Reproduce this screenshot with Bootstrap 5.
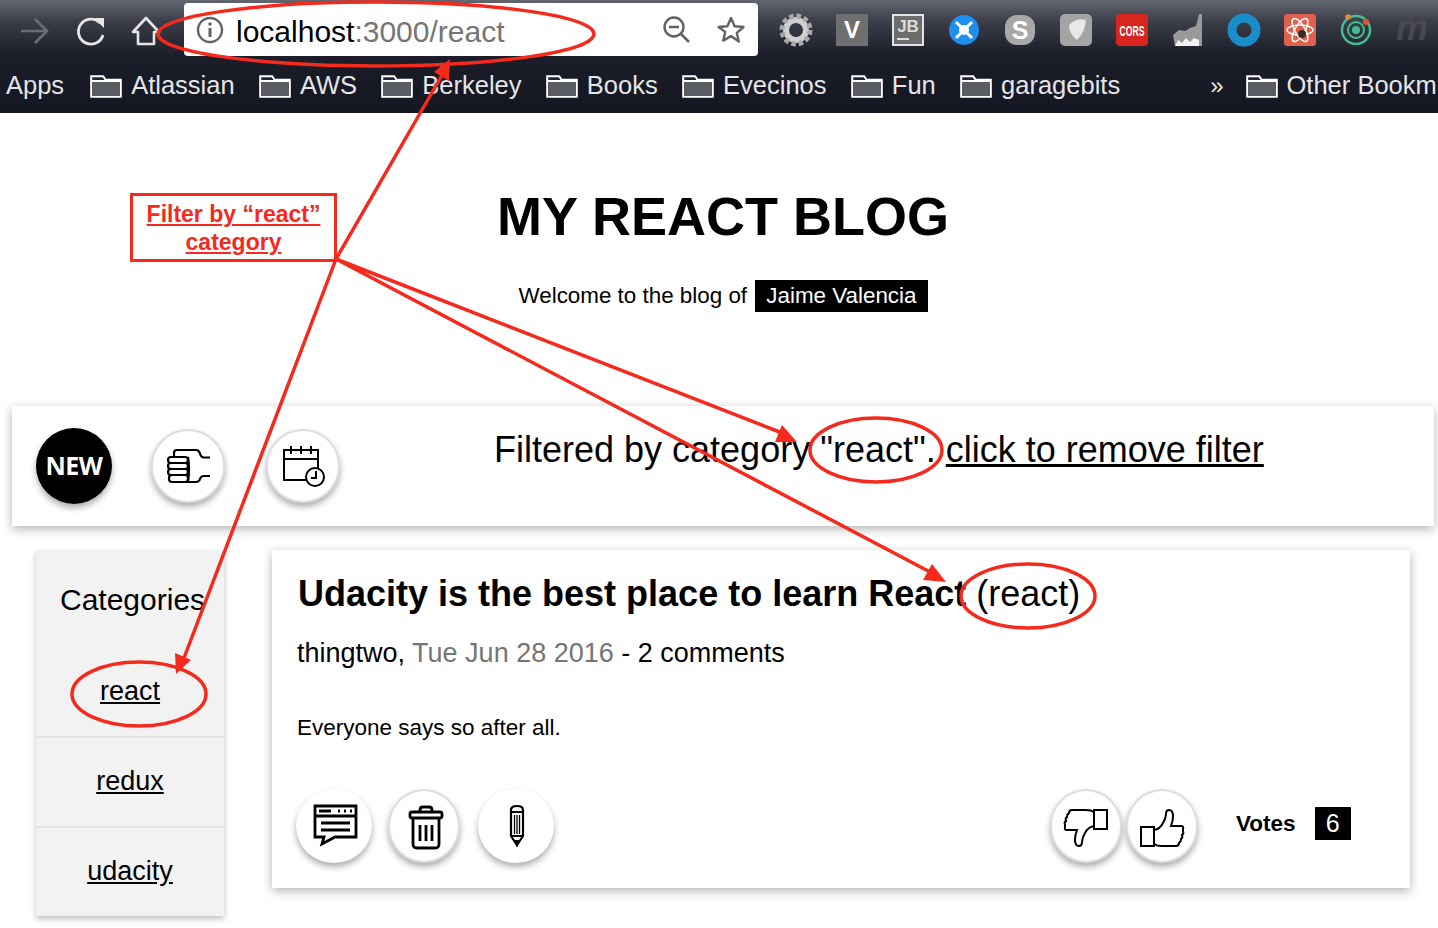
<!DOCTYPE html>
<html lang="en">
<head>
  <meta charset="UTF-8">
  <meta name="viewport" content="width=device-width,initial-scale=1">
  <title>My React Blog</title>
  <link href="https://cdn.jsdelivr.net/npm/bootstrap@5.3.3/dist/css/bootstrap.min.css" rel="stylesheet">
  <style>
    html, body { height: 928px; overflow: hidden; }
    body { font-family: "Liberation Sans", Arial, sans-serif; color: #000; background: #fff; position: relative; }
    a { color: #000; }

    .browser-chrome { height: 113px; background: linear-gradient(180deg, #63666f 0, #3a3c47 22px, #1b1d28 56px, #141722 100%); overflow: hidden; }
    .tool-row { height: 60px; padding-top: 3px; }
    .nav-ico { width: 56px; height: 53px; }
    .nav-first { margin-left: 6px; margin-right: 10px; flex: none; }
    .url-box { width: 574px; height: 53px; background: #fff; border-radius: 4px; padding: 0 12px; font-size: 30px; flex: none; }
    .url-host { margin-left: 12px; padding-top: 3px; }
    .url-rest { color: #757575; }
    .ext-row { margin-left: 10px; flex: none; }
    .ext-ico { width: 56px; height: 56px; margin-top: -3px; }
    .mark-row { height: 51px; color: #e4e5e8; font-size: 25.5px; padding-left: 6px; white-space: nowrap; }
    .mark-item { margin-left: 24.3px; gap: 9px; }
    .mark-first { margin-left: 26px; }
    .mark-more { margin-left: 90px; font-size: 24px; }
    .mark-last { margin-left: 22px; }

    .blog-head { height: 293px; text-align: center; }
    .blog-title { font-size: 54px; font-weight: 700; line-height: 64px; padding-top: 71px; margin: 0 0 0 8px; }
    .blog-welcome { font-size: 22.4px; margin-top: 31px; margin-left: 8px; }
    .owner-chip { background: #000; color: #fff; display: inline-block; height: 32px; line-height: 32px; padding: 0 11px; margin-left: 2px; }

    .filter-bar { margin-left: 12px; width: 1422px; height: 120px; padding: 22px 24px 0; box-shadow: 0 3px 10px rgba(0,0,0,.3); }
    .filter-text { font-size: 36px; margin-left: 154px; line-height: 44px; }
    .round-btn { width: 74px; height: 74px; padding: 0; border-radius: 50%; background: #fff; border: 2px solid #dedede; box-shadow: 0 4px 6px rgba(0,0,0,.32); flex: none; display: flex; align-items: center; justify-content: center; }
    .round-btn:hover { background: #fff; border-color: #dedede; }
    .round-btn svg { display: block; flex: none; }
    .round-soft { width: 76px; border: 0; }
    .round-slim { width: 72px; }
    .round-new { width: 76px; height: 76px; background: #000; color: #fff; border: 0; font-family: "Open Sans", sans-serif; font-weight: 700; font-size: 25px; letter-spacing: -.5px; }
    .round-new:hover { background: #000; color: #fff; }
    .ml-bar1 { margin-left: 39px; margin-top: 1px; }
    .ml-bar2 { margin-left: 41px; margin-top: 1px; }

    .blog-main { padding-left: 36px; padding-top: 24px; gap: 48px; }
    .cat-panel { width: 188px; height: 366px; background: #f2f2f2; box-shadow: 0 3px 6px rgba(0,0,0,.25); text-align: center; }
    .cat-title { font-size: 30px; padding: 30px 0 0 24px; height: 98px; margin: 0; font-weight: 400; line-height: 40px; text-align: left; }
    .cat-item { height: 90px; font-size: 27px; padding-top: 23px; line-height: 40px; border-bottom: 2px solid #e4e4e4; }
    .cat-item:last-child { border-bottom: 0; }

    .post-card { width: 1138px; height: 338px; border: 0; border-radius: 0; box-shadow: 0 3px 10px rgba(0,0,0,.3); padding: 22px 26px 0; }
    .post-title { font-size: 36px; line-height: 44px; margin: 0; font-weight: 700; white-space: nowrap; }
    .post-tag { font-weight: 400; }
    .post-meta { font-size: 27px; line-height: 36px; margin: 19px 0 0 -1px; }
    .post-date { color: #757575; }
    .post-body { font-size: 22.5px; line-height: 30px; margin: 42px 0 0 -1px; }
    .post-actions { margin-top: 46px; margin-left: -2px; }
    .gap-trash { margin-left: 16px; }
    .gap-pencil { margin-left: 18px; }
    .vote-down { margin-left: 496px; }
    .vote-up { margin-left: 4px; }
    .vote-label { font-size: 22.5px; font-weight: 700; margin-left: 38px; margin-bottom: 5px; }
    .vote-count { background: #000; color: #fff; font-size: 25px; width: 36px; height: 33px; line-height: 33px; text-align: center; margin-left: 19px; margin-bottom: 6px; }

    .notes-layer { position: absolute; left: 0; top: 0; pointer-events: none; }
    .note-box { position: absolute; left: 130px; top: 193px; width: 207px; height: 69px; border: 3px solid #f52a1c; background: #fff; color: #f52a1c; font-weight: 700; font-size: 23px; line-height: 28px; text-align: center; padding-top: 4px; text-decoration: underline; }
  </style>
</head>
<body>

<svg width="0" height="0" class="d-block">
  <defs>
    <symbol id="ic-folder" viewBox="0 0 32 24">
      <path d="M1.2 22.8V2.2h12l2.4 3.6h15.2v17z" fill="#23252f" stroke="#fff" stroke-width="2"/>
      <path d="M2 7.500h28v14.500H2z" fill="#5a5c64"/>
      <path d="M1.2 7h29.6" stroke="#fff" stroke-width="2"/>
    </symbol>
  </defs>
</svg>

<header class="browser-chrome">
  <div class="tool-row d-flex">
    <div class="nav-first d-flex">
      <svg class="nav-ico" viewBox="0 0 56 53"><path d="M15 29h26M29 17l12 12-12 12" transform="translate(0 -1)" fill="none" stroke="#6b6d75" stroke-width="2.6"/></svg>
      <svg class="nav-ico" viewBox="0 0 56 53"><path d="M38 20a12.5 12.5 0 1 0 3 12" fill="none" stroke="#e6e6e6" stroke-width="2.8"/><path d="M32 14h10v10z" fill="#e6e6e6" transform="translate(0 1)"/></svg>
      <svg class="nav-ico" viewBox="0 0 56 53"><path d="M28 15L15 29h5v12h16V29h5z" fill="none" stroke="#e6e6e6" stroke-width="2.6" stroke-linejoin="round"/></svg>
    </div>
    <div class="url-box d-flex align-items-center">
      <svg width="28" height="28" viewBox="0 0 28 28"><circle cx="14" cy="14" r="12" fill="none" stroke="#5f6368" stroke-width="2.4"/><path d="M14 12v9" stroke="#5f6368" stroke-width="3"/><circle cx="14" cy="8" r="1.8" fill="#5f6368"/></svg>
      <span class="url-host">localhost<span class="url-rest">:3000/react</span></span>
      <svg class="ms-auto" width="30" height="30" viewBox="0 0 30 30"><circle cx="12" cy="12" r="9.5" fill="none" stroke="#5f6368" stroke-width="2.4"/><path d="M7 12h10M19 19l8 8" stroke="#5f6368" stroke-width="2.6"/></svg>
      <svg class="ms-4" width="30" height="30" viewBox="0 0 30 30"><path d="M15 3l3.6 8.200 8.900.8-6.700 5.900 2 8.700L15 21.100l-7.800 4.500 2-8.700L2.500 12l8.900-.8z" fill="none" stroke="#5f6368" stroke-width="2.4" stroke-linejoin="round"/></svg>
    </div>
    <div class="ext-row d-flex">
      <svg class="ext-ico" viewBox="0 0 56 56"><circle cx="28" cy="30" r="10" fill="none" stroke="#d0d0d0" stroke-width="6"/><circle cx="28" cy="30" r="14" fill="none" stroke="#a9a9a9" stroke-width="5" stroke-dasharray="4.5 2.83"/></svg>
      <svg class="ext-ico" viewBox="0 0 56 56"><rect x="12" y="14" width="32" height="32" fill="#6f6f6f"/><text x="28" y="38" font-size="24" font-weight="700" fill="#fff" text-anchor="middle">V</text></svg>
      <svg class="ext-ico" viewBox="0 0 56 56"><rect x="13" y="15" width="30" height="30" fill="#6d6d6d" stroke="#e4e4e4" stroke-width="2"/><text x="28" y="32" font-size="17" font-weight="700" fill="#dcdcdc" text-anchor="middle">JB</text><path d="M17 39h12" stroke="#dcdcdc" stroke-width="2"/></svg>
      <svg class="ext-ico" viewBox="0 0 56 56"><circle cx="28" cy="30" r="15" fill="#1f8fee"/><circle cx="28" cy="30" r="5" fill="#fff"/><path d="M20 22l16 16M36 22L20 38" stroke="#fff" stroke-width="3"/></svg>
      <svg class="ext-ico" viewBox="0 0 56 56"><rect x="13" y="15" width="30" height="30" rx="12" fill="#a8a8a8"/><text x="28" y="39" font-size="25" font-weight="700" fill="#fff" text-anchor="middle">S</text></svg>
      <svg class="ext-ico" viewBox="0 0 56 56"><rect x="12" y="14" width="32" height="32" rx="5" fill="#a4a4a4"/><path d="M21 25q8-8 17-5-1 12-9 20-8-6-8-15z" fill="#e8e8e8"/></svg>
      <svg class="ext-ico" viewBox="0 0 56 56"><rect x="12" y="14" width="32" height="32" rx="4" fill="#d8261c"/><text x="28" y="36" font-size="14" font-weight="700" fill="#fff" text-anchor="middle" textLength="25" lengthAdjust="spacingAndGlyphs">CORS</text></svg>
      <svg class="ext-ico" viewBox="0 0 56 56"><path d="M13 35l6-5 6 1 5-3 6-2 3-12h3v32H15z" fill="#9a9a9a"/><path d="M15 46l3-6 4 3 4-5 4 4 4-4 5 2v6z" fill="#f2f2f2"/></svg>
      <svg class="ext-ico" viewBox="0 0 56 56"><circle cx="28" cy="30" r="12" fill="none" stroke="#1a8dcb" stroke-width="9"/></svg>
      <svg class="ext-ico" viewBox="0 0 56 56"><rect x="12" y="14" width="32" height="32" rx="3" fill="#e0604c"/><g fill="none" stroke="#fff" stroke-width="1.5"><ellipse cx="28" cy="30" rx="13" ry="5"/><ellipse cx="28" cy="30" rx="13" ry="5" transform="rotate(60 28 30)"/><ellipse cx="28" cy="30" rx="13" ry="5" transform="rotate(120 28 30)"/></g><circle cx="30" cy="34" r="4" fill="#3a2a28"/></svg>
      <svg class="ext-ico" viewBox="0 0 56 56"><circle cx="28" cy="30" r="14" fill="none" stroke="#3fbf8f" stroke-width="2.5"/><circle cx="28" cy="30" r="8" fill="none" stroke="#3fbf8f" stroke-width="2"/><circle cx="28" cy="30" r="4" fill="#3fbf8f"/><circle cx="20" cy="17" r="2.8" fill="#ea8a38"/><circle cx="38" cy="22" r="3" fill="#e2523a"/></svg>
      <svg class="ext-ico" viewBox="0 0 56 56"><text x="28" y="40" font-size="36" font-style="italic" font-weight="700" fill="#474850" text-anchor="middle">m</text></svg>
    </div>
  </div>
  <div class="mark-row d-flex align-items-center">
    <span>Apps</span>
    <span class="mark-item mark-first d-flex align-items-center"><svg width="32" height="24"><use href="#ic-folder"/></svg>Atlassian</span>
    <span class="mark-item d-flex align-items-center"><svg width="32" height="24"><use href="#ic-folder"/></svg>AWS</span>
    <span class="mark-item d-flex align-items-center"><svg width="32" height="24"><use href="#ic-folder"/></svg>Berkeley</span>
    <span class="mark-item d-flex align-items-center"><svg width="32" height="24"><use href="#ic-folder"/></svg>Books</span>
    <span class="mark-item d-flex align-items-center"><svg width="32" height="24"><use href="#ic-folder"/></svg>Evecinos</span>
    <span class="mark-item d-flex align-items-center"><svg width="32" height="24"><use href="#ic-folder"/></svg>Fun</span>
    <span class="mark-item d-flex align-items-center"><svg width="32" height="24"><use href="#ic-folder"/></svg>garagebits</span>
    <span class="mark-more">»</span>
    <span class="mark-item mark-last d-flex align-items-center"><svg width="32" height="24"><use href="#ic-folder"/></svg>Other Bookm</span>
  </div>
</header>

<section class="blog-head">
  <h1 class="blog-title">MY REACT BLOG</h1>
  <p class="blog-welcome">Welcome to the blog of <span class="owner-chip">Jaime Valencia</span></p>
</section>

<section class="filter-bar d-flex align-items-start">
  <button class="btn round-btn round-new">NEW</button>
  <button class="btn round-btn ml-bar1">
    <svg width="74" height="74" viewBox="0 0 74 74" fill="none" stroke="#000" stroke-width="2.2"><path d="M23 28v-4q0-3 3-3h19q3 0 4 3.500q1 4 4 4h6M59 47h-6q-3 0-4 3t-4 3H26"/><rect x="17" y="28" width="20" height="6" rx="3"/><rect x="17" y="34" width="20" height="6" rx="3"/><rect x="17" y="40" width="20" height="6" rx="3"/><rect x="18" y="46" width="19" height="7" rx="3"/><path d="M37 28q2 12 0 25"/></svg>
  </button>
  <button class="btn round-btn ml-bar2">
    <svg width="74" height="74" viewBox="0 0 74 74" fill="none" stroke="#000" stroke-width="2"><path d="M43 51H18V21h34v20M18 30h34M25 17v8M35 17v8M45 17v8"/><circle cx="49" cy="48" r="9" fill="#fff"/><path d="M50 42v7h-5"/></svg>
  </button>
  <p class="filter-text mb-0">Filtered by category "react". <a href="#">click to remove filter</a></p>
</section>

<main class="blog-main d-flex align-items-start">
  <aside class="cat-panel">
    <h2 class="cat-title">Categories</h2>
    <div class="cat-item"><a href="#">react</a></div>
    <div class="cat-item"><a href="#">redux</a></div>
    <div class="cat-item"><a href="#">udacity</a></div>
  </aside>
  <article class="post-card card">
    <h3 class="post-title">Udacity is the best place to learn React <span class="post-tag">(react)</span></h3>
    <p class="post-meta">thingtwo, <span class="post-date">Tue Jun 28 2016</span> - 2 comments</p>
    <p class="post-body">Everyone says so after all.</p>
    <div class="post-actions d-flex align-items-center">
      <button class="btn round-btn round-soft">
        <svg width="74" height="74" viewBox="0 0 74 74" fill="none" stroke="#000" stroke-width="2.8"><path d="M18 17h41v31H38l-13 7 2-7h-9z"/><path d="M18 27h41M22 22h12M24 34h29M24 41h29"/><path d="M41 22h2M47 22h2M53 22h2" stroke-width="3"/></svg>
      </button>
      <button class="btn round-btn round-slim gap-trash">
        <svg width="74" height="74" viewBox="-2 0 74 74" fill="none" stroke="#000" stroke-width="2.8"><path d="M31 23v-2q0-3 3-3h6q3 0 3 3v2"/><rect x="21" y="23" width="32" height="6" rx="2"/><path d="M24 29v26q0 4 4 4h18q4 0 4-4V29M31 36v16M37 36v16M43 36v16"/></svg>
      </button>
      <button class="btn round-btn round-soft gap-pencil">
        <svg width="74" height="74" viewBox="0 0 74 74" fill="none" stroke="#000" stroke-width="2.2"><path d="M32 21q0-4 6-4t6 4v26l-6 9-6-9zM32 23h12M32 47h12"/><path d="M35.500 26v19M38 26v19M40.500 26v19" stroke-width="1.3"/><path d="M36 52h4l-2 4z" fill="#000"/></svg>
      </button>
      <button class="btn round-btn round-slim vote-down">
        <svg width="74" height="74" viewBox="0 0 74 74" fill="none" stroke="#000" stroke-width="2"><g transform="rotate(180 37 39)"><rect x="16" y="38" width="13" height="19"/><path d="M29 41q6-1 9-7q3-5 3-9q0-4 3-4q4 0 4 6q0 5-2 10h10q3 0 2 3v2q1 3-1 4q1 3-1 4q0 3-2 4q0 3-3 3H37q-5 0-8-2"/></g></svg>
      </button>
      <button class="btn round-btn round-slim vote-up">
        <svg width="74" height="74" viewBox="0 0 74 74" fill="none" stroke="#000" stroke-width="2"><rect x="16" y="38" width="13" height="19"/><path d="M29 41q6-1 9-7q3-5 3-9q0-4 3-4q4 0 4 6q0 5-2 10h10q3 0 2 3v2q1 3-1 4q1 3-1 4q0 3-2 4q0 3-3 3H37q-5 0-8-2"/></svg>
      </button>
      <span class="vote-label">Votes</span>
      <span class="vote-count">6</span>
    </div>
  </article>
</main>

<!-- hand drawn annotations on top of the page -->
<svg class="notes-layer" width="1438" height="928" viewBox="0 0 1438 928" fill="none" stroke="#f52a1c" stroke-width="3.5">
  <ellipse cx="376" cy="34" rx="218" ry="32"/>
  <ellipse cx="876" cy="450" rx="66" ry="32"/>
  <ellipse cx="1028" cy="596" rx="67" ry="32"/>
  <ellipse cx="139" cy="694" rx="67" ry="32"/>
  <path d="M336 259L445 70M336 259L184 658M336 259L782 433M336 259L932 573"/>
  <g fill="#f52a1c" stroke="none">
    <path d="M450 59l-1 22-15-9z"/>
    <path d="M176 674l-1-21 16 7z"/>
    <path d="M797 442l-22 0 7-17z"/>
    <path d="M946 582l-23-2 9-16z"/>
  </g>
</svg>
<div class="note-box">Filter by “react”<br>category</div>

<script src="https://cdn.jsdelivr.net/npm/bootstrap@5.3.3/dist/js/bootstrap.bundle.min.js"></script>
</body>
</html>
